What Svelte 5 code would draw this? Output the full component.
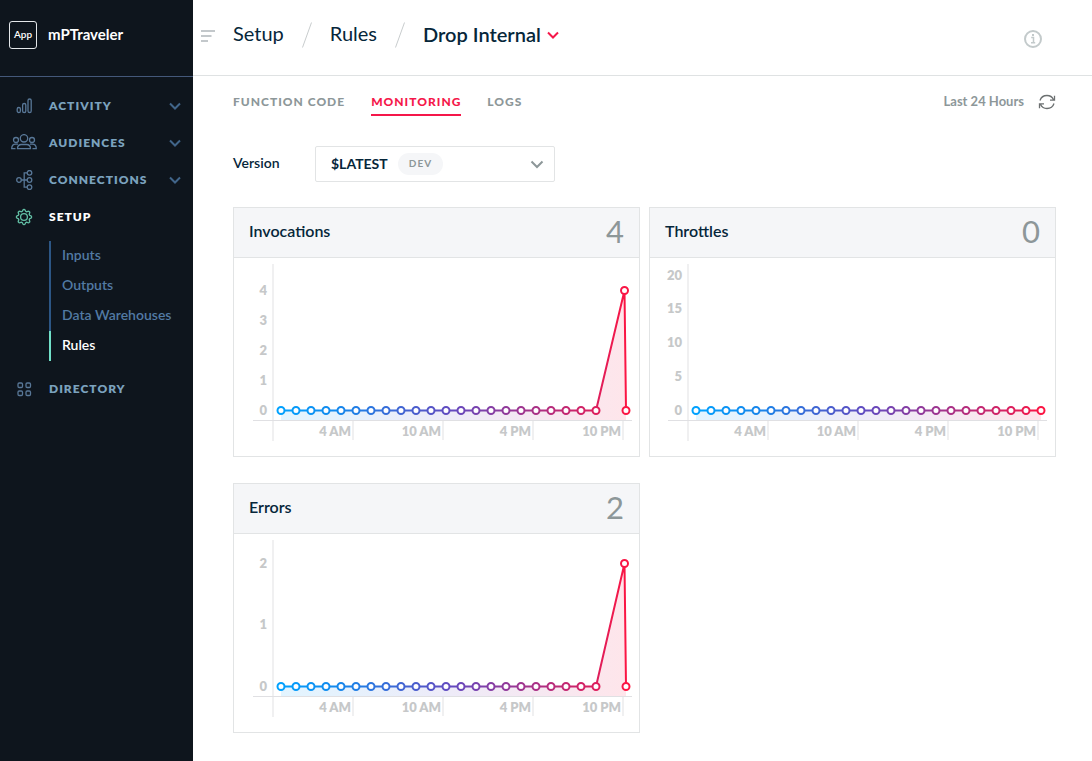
<script>
  const sections = [
    { id: 'activity', label: 'Activity', expandable: true },
    { id: 'audiences', label: 'Audiences', expandable: true },
    { id: 'connections', label: 'Connections', expandable: true },
    {
      id: 'setup',
      label: 'Setup',
      active: true,
      children: ['Inputs', 'Outputs', 'Data Warehouses', 'Rules']
    },
    { id: 'directory', label: 'Directory' }
  ];

  const BASE = 152.5;
  const flat = (count, start) => Array.from({ length: count }, (_, i) => [start + i * 15, BASE]);
  const hours = ['4 AM', '10 AM', '4 PM', '10 PM'];

  const charts = [
    {
      id: 'invocations',
      title: 'Invocations',
      total: 4,
      axis: 39,
      labels: [[4, 32], [3, 62], [2, 92], [1, 122], [0, 152]],
      points: [...flat(22, 47), [390.5, 32.5], [392, BASE]]
    },
    {
      id: 'throttles',
      title: 'Throttles',
      total: 0,
      axis: 38,
      labels: [[20, 17], [15, 50], [10, 84], [5, 118], [0, 152]],
      points: flat(24, 46)
    },
    {
      id: 'errors',
      title: 'Errors',
      total: 2,
      axis: 39,
      labels: [[2, 29], [1, 90], [0, 152]],
      points: [...flat(22, 47), [390.5, 29.5], [392, BASE]]
    }
  ];

  const path = (pts) => pts.map((p) => p.join(',')).join(' ');
  const area = (pts) => `${pts[0][0]},162 ${path(pts)} ${pts[pts.length - 1][0]},162`;

  const gear = Array.from({ length: 64 }, (_, i) => {
    const a = (i / 64) * Math.PI * 2;
    const r = 6.7 + 0.85 * Math.tanh(2.5 * Math.cos(8 * a));
    return `${(9 + r * Math.cos(a)).toFixed(2)},${(9 + r * Math.sin(a)).toFixed(2)}`;
  }).join(' ');
</script>

{#snippet navIcon(id)}
  {#if id === 'activity'}
    <svg class="icon" width="26" height="18" viewBox="0 0 26 18" aria-hidden="true">
      <rect x="6.200" y="10.500" width="3.200" height="5" rx="1.600" />
      <rect x="11.600" y="6.500" width="3.200" height="9" rx="1.600" />
      <rect x="17" y="2" width="3.200" height="13.500" rx="1.600" />
    </svg>
  {:else if id === 'audiences'}
    <svg class="icon" width="26" height="18" viewBox="0 0 26 18" aria-hidden="true">
      <circle cx="13" cy="4.300" r="3.700" />
      <circle cx="5" cy="6" r="2.500" />
      <circle cx="21" cy="6" r="2.500" />
      <path d="M6.500 14.700c0-2.800 2-4.200 4-4.200h5c2 0 4 1.400 4 4.200z" />
      <path d="M4.500 14.700H.7c0-3 1.200-4.500 4-4.500H7M21.500 14.700h3.800c0-3-1.200-4.500-4-4.500H19" />
    </svg>
  {:else if id === 'connections'}
    <svg class="icon" width="26" height="20" viewBox="0 0 26 20" aria-hidden="true">
      <circle cx="8" cy="10" r="2.300" />
      <circle cx="18.500" cy="2.800" r="2.300" />
      <circle cx="18.500" cy="10" r="2.300" />
      <circle cx="18.500" cy="17.200" r="2.300" />
      <path d="M10.400 10h5.800M16.200 2.800h-3v14.400h3" />
    </svg>
  {:else if id === 'setup'}
    <svg class="icon" width="26" height="18" viewBox="-4 0 26 18" aria-hidden="true">
      <polygon points={gear} />
      <circle cx="9" cy="9" r="3.400" />
    </svg>
  {:else}
    <svg class="icon" width="26" height="18" viewBox="0 0 26 18" aria-hidden="true">
      <rect x="7" y="3" width="4.500" height="4.500" rx="1.200" />
      <rect x="15" y="3" width="4.500" height="4.500" rx="1.200" />
      <rect x="7" y="11" width="4.500" height="4.500" rx="1.200" />
      <rect x="15" y="11" width="4.500" height="4.500" rx="1.200" />
    </svg>
  {/if}
{/snippet}

<div class="app">
  <aside class="sidebar">
    <div class="brand">
      <span class="logo">App</span>
      <span class="name">mPTraveler</span>
    </div>
    <nav aria-label="Main">
      {#each sections as s}
        <button class="section" class:active={s.active}>
          {@render navIcon(s.id)}
          <span class="label">{s.label}</span>
          {#if s.expandable}
            <svg class="chev" width="12" height="8" viewBox="0 0 12 8" aria-hidden="true"><path d="M1 1.500l5 5 5-5" /></svg>
          {/if}
        </button>
        {#if s.children}
          <ul class="children">
            {#each s.children as c}
              <li class:current={c === 'Rules'}><a href="#{c}">{c}</a></li>
            {/each}
          </ul>
        {/if}
      {/each}
    </nav>
  </aside>

  <div class="page">
    <header class="topbar">
      <button class="menu" aria-label="Toggle menu">
        <svg width="14" height="12" viewBox="0 0 14 12"><path d="M0 1h14M0 6h10.500M0 11h7" /></svg>
      </button>
      <nav class="crumbs" aria-label="Breadcrumb">
        <a href="#setup">Setup</a>
        <svg class="slash" width="10" height="26" viewBox="0 0 10 26" aria-hidden="true"><path d="M9.500.500l-9 25" /></svg>
        <a href="#rules">Rules</a>
        <svg class="slash" width="10" height="26" viewBox="0 0 10 26" aria-hidden="true"><path d="M9.500.500l-9 25" /></svg>
        <button class="crumb-menu">
          <span>Drop Internal</span>
          <svg width="12" height="8" viewBox="0 0 12 8" aria-hidden="true"><path d="M1 1.500l5 5 5-5" /></svg>
        </button>
      </nav>
      <button class="info" aria-label="Information">
        <svg width="18" height="18" viewBox="0 0 18 18">
          <circle cx="9" cy="9" r="8" />
          <path d="M7.200 7.500h2.300v5M7 12.700h4.200" />
          <rect x="8" y="4" width="2" height="2" />
        </svg>
      </button>
    </header>

    <main>
      <div class="tabbar">
        <div class="tabs" role="tablist">
          <button role="tab" aria-selected="false">Function code</button>
          <button role="tab" aria-selected="true">Monitoring</button>
          <button role="tab" aria-selected="false">Logs</button>
        </div>
        <div class="range">
          <span>Last 24 Hours</span>
          <button aria-label="Refresh">
            <svg width="18" height="16" viewBox="0 0 18 16">
              <path d="M2 6.500C3 3.300 5.700 1.500 9 1.500c3 0 5.300 1.500 6.400 4M16.500 1.700v4.500h-4.500" />
              <path d="M16 9.500c-1 3.200-3.700 5-7 5-3 0-5.300-1.500-6.400-4M1.500 14.300V9.800H6" />
            </svg>
          </button>
        </div>
      </div>

      <div class="version">
        <label for="version">Version</label>
        <div class="picker">
          <select id="version"><option>$LATEST</option></select>
          <span class="badge">DEV</span>
          <svg class="caret" width="14" height="9" viewBox="0 0 14 9" aria-hidden="true"><path d="M1.500 1.500L7 7l5.500-5.500" /></svg>
        </div>
      </div>

      <div class="cards">
        {#each charts as c}
          <section class="card">
            <div class="card-head">
              <h2>{c.title}</h2>
              <span class="total">{c.total}</span>
            </div>
            <svg class="chart" viewBox="0 0 405 198" role="img" aria-label={c.title}>
              <defs>
                <linearGradient id="g-{c.id}" gradientUnits="userSpaceOnUse" x1="43" y1="0" x2="396" y2="0">
                  <stop offset="0" stop-color="#00a2ff" />
                  <stop offset="0.170" stop-color="#1488ec" />
                  <stop offset="0.500" stop-color="#6549be" />
                  <stop offset="0.900" stop-color="#db1f5e" />
                  <stop offset="1" stop-color="#ff1440" />
                </linearGradient>
              </defs>
              <g class="axes">
                <rect class="soft" x={c.axis - 1} y="6" width="2" height="177" />
                {#each hours as h, i}
                  <rect class="soft" x={c.axis + 79 + i * 90} y="163" width="2" height="19" />
                  <text x={c.axis + 78 + i * 90} y="178">{h}</text>
                {/each}
                {#each c.labels as [v, y]}
                  <text x={c.axis - 6} y={y + 5}>{v}</text>
                {/each}
              </g>
              <polygon points={area(c.points)} fill="url(#g-{c.id})" opacity="0.110" />
              <rect class="line" x={c.axis - 20} y="162" width="379" height="1" />
              <g stroke="url(#g-{c.id})" stroke-width="2">
                <polyline points={path(c.points)} fill="none" stroke-linejoin="round" />
                {#each c.points as [x, y]}
                  <circle cx={x} cy={y} r="3.500" fill="#fff" />
                {/each}
              </g>
            </svg>
          </section>
        {/each}
      </div>
    </main>
  </div>
</div>

<style>
  :global(body) {
    background: #fff;
    font-family: Lato, "Open Sans", sans-serif;
    color: #06263a;
  }
  button {
    font: inherit;
    color: inherit;
    background: none;
    border: 0;
    padding: 0;
    cursor: pointer;
  }
  a {
    color: inherit;
    text-decoration: none;
  }
  svg {
    display: block;
    fill: none;
    flex: none;
  }
  .app {
    display: flex;
    min-height: 100vh;
  }

  .sidebar {
    flex: none;
    width: 193px;
    background: #0e151d;
    color: #7ba2be;
  }
  .brand {
    display: flex;
    align-items: center;
    gap: 11px;
    height: 70px;
    padding: 0 9px 6px;
    border-bottom: 1px solid #44587a;
    color: #fff;
  }
  .logo {
    box-sizing: border-box;
    width: 28px;
    height: 28px;
    border: 1px solid #e4e7ea;
    border-radius: 3px;
    text-align: center;
    font-size: 10px;
    font-weight: 600;
    line-height: 24px;
  }
  .name {
    padding-bottom: 2px;
    font-size: 15px;
    font-weight: 700;
  }
  .sidebar nav {
    padding-top: 10px;
  }
  .section {
    display: flex;
    align-items: center;
    width: 100%;
    height: 37px;
    padding: 0 12px 0 11px;
    gap: 12px;
  }
  .label {
    flex: 1;
    text-align: left;
    text-transform: uppercase;
    font-size: 12px;
    font-weight: 800;
    letter-spacing: 1px;
  }
  .section.active .label {
    color: #fff;
  }
  .icon {
    stroke: #587797;
    stroke-width: 1.300px;
  }
  .active .icon {
    stroke: #62bfa5;
  }
  .chev {
    stroke: #41658a;
    stroke-width: 2px;
  }
  .children {
    list-style: none;
    margin: 6px 0 9px 49px;
    padding: 0;
    font-size: 14px;
    font-weight: 600;
    color: #527aa3;
  }
  .children li {
    height: 30px;
    line-height: 28px;
    padding-left: 11px;
    border-left: 2px solid #2c5685;
  }
  .children .current {
    border-color: #71e0c8;
    color: #fff;
  }

  .page {
    flex: 1;
    min-width: 0;
  }
  .topbar {
    display: flex;
    align-items: center;
    height: 75px;
    padding: 0 50px 0 8px;
    border-bottom: 1px solid #dfe2e3;
  }
  .menu {
    margin-right: 18px;
    padding-bottom: 4px;
  }
  .menu svg {
    stroke: #c3c8cb;
    stroke-width: 2px;
  }
  .crumbs {
    display: flex;
    align-items: center;
    gap: 18px;
    flex: 1;
    padding-bottom: 5px;
    font-size: 20px;
    line-height: 26px;
  }
  .crumbs a {
    padding-bottom: 4px;
  }
  .slash {
    stroke: #c8ccce;
  }
  .crumb-menu {
    display: flex;
    align-items: center;
    gap: 6px;
    font-weight: 600;
  }
  .crumb-menu span {
    padding-bottom: 2px;
  }
  .crumb-menu svg {
    stroke: #f5174a;
    stroke-width: 2px;
  }
  .info {
    padding-top: 2px;
  }
  .info svg {
    stroke: #c3cacb;
    stroke-width: 2px;
  }
  .info path {
    stroke-width: 1.500px;
  }
  .info rect {
    fill: #c3cacb;
    stroke: none;
  }

  main {
    padding: 0 36px 28px 40px;
  }
  .tabbar {
    display: flex;
    justify-content: space-between;
    align-items: center;
    height: 52px;
  }
  .tabs {
    display: flex;
    gap: 26px;
  }
  .tabs button {
    border-bottom: 2px solid transparent;
    padding: 6px 0 4px;
    font-size: 12px;
    line-height: 16px;
    font-weight: 900;
    letter-spacing: 1px;
    text-transform: uppercase;
    color: #8d9799;
  }
  .tabs [aria-selected="true"] {
    color: #f5174a;
    border-color: #f5174a;
  }
  .range {
    display: flex;
    align-items: center;
    gap: 14px;
    font-size: 13px;
    font-weight: 700;
    color: #8d9799;
  }
  .range span {
    padding-bottom: 3px;
  }
  .range svg {
    stroke: #6c7071;
    stroke-width: 1.300px;
  }
  .version {
    display: flex;
    align-items: center;
    margin: 18px 0 25px;
  }
  .version label {
    width: 82px;
    padding-bottom: 4px;
    font-size: 14px;
    font-weight: 600;
  }
  .picker {
    position: relative;
    width: 240px;
    height: 36px;
  }
  select {
    appearance: none;
    width: 100%;
    height: 100%;
    padding: 0 15px 2px;
    border: 1px solid #e2e4e5;
    border-radius: 2px;
    background: #fff;
    font: 700 14px Lato, "Open Sans", sans-serif;
    color: #06263a;
  }
  .badge {
    position: absolute;
    left: 83px;
    top: 7px;
    width: 45px;
    height: 22px;
    border-radius: 11px;
    background: #f5f6f8;
    color: #8d9799;
    text-align: center;
    font-size: 10px;
    line-height: 21px;
    font-weight: 700;
    letter-spacing: 1px;
    pointer-events: none;
  }
  .caret {
    position: absolute;
    right: 11px;
    top: 14px;
    stroke: #8d9799;
    stroke-width: 2px;
    pointer-events: none;
  }

  .cards {
    display: grid;
    grid-template-columns: 1fr 1fr;
    gap: 26px 9px;
  }
  .card {
    border: 1px solid #e2e4e5;
  }
  .card-head {
    display: flex;
    align-items: center;
    justify-content: space-between;
    box-sizing: border-box;
    height: 50px;
    padding: 0 15px 4px;
    background: #f5f6f8;
    border-bottom: 1px solid #e2e4e5;
  }
  h2 {
    margin: 0;
    font-size: 16px;
    font-weight: 600;
  }
  .total {
    font-size: 31px;
    font-weight: 400;
    color: #8d9799;
  }
  .chart {
    width: 100%;
    height: auto;
  }
  .chart text {
    fill: #c6c8c9;
    font-size: 13px;
    font-weight: 800;
    text-anchor: end;
  }
  .soft {
    fill: #f0f0f1;
  }
  .line {
    fill: #e0e0e3;
  }
</style>
